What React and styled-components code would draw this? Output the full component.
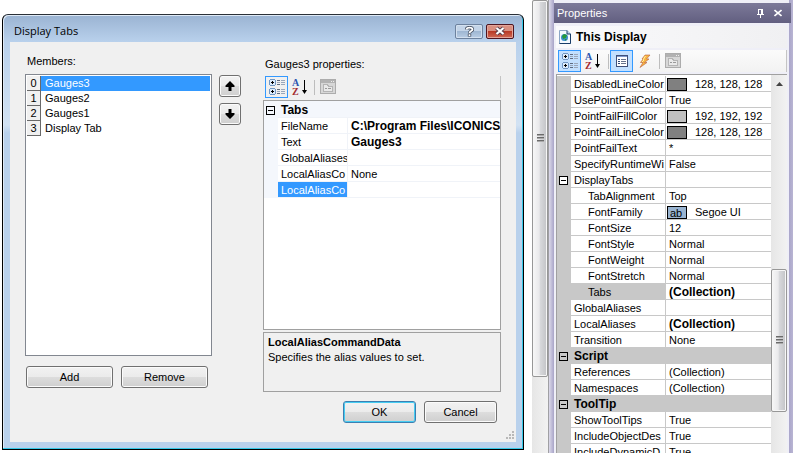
import React, { useState } from "react";
import styled, { createGlobalStyle, css } from "styled-components";

const ui = '"Liberation Sans", Arial, sans-serif';

const Global = createGlobalStyle`
  * { box-sizing: border-box; }
  body { margin: 0; background: #fff; color: #000; font: 11px/16px ${ui}; }
  button { font: inherit; color: inherit; padding: 0; }
`;

const Page = styled.main`
  display: flex;
  height: 100vh;
  overflow: hidden;
`;

/* ---------- dialog ---------- */

const Dialog = styled.section`
  flex: 1;
  min-width: 0;
  display: flex;
  flex-direction: column;
  margin: 14px 8px 3px 2px;
  border: 1px solid #000;
  border-top-color: #2a3038;
  border-radius: 6px 6px 0 0;
  background: linear-gradient(#9ab3d2, #b9d1ec 27px, #d2e2f3 110px, #b9d1ec 118px);
  box-shadow: inset -1px -1px 0 #35c8e8, inset 1px 1px 0 #dfeaf6;
  padding: 0 7px 7px;
`;

const TitleBar = styled.header`
  display: flex;
  align-items: center;
  gap: 3px;
  height: 27px;
  padding: 5px 2px 0 4px;
`;

const DialogTitle = styled.h1`
  flex: 1;
  margin: 0;
  font: 11px/16px "Open Sans", "Noto Sans", sans-serif;
`;

const CaptionButton = styled.button`
  width: 28px;
  height: 15px;
  display: flex;
  align-items: center;
  justify-content: center;
  border: 1px solid ${(p) => (p.$danger ? "#4e1520" : "#6d829e")};
  border-radius: 2px;
  box-shadow: inset 0 0 0 1px ${(p) => (p.$danger ? "#e3a59a" : "#d3e0ef")};
  background: ${(p) =>
    p.$danger
      ? "linear-gradient(#d98f80 0 45%, #b93a26 50%, #cf6a55)"
      : "linear-gradient(#c3d4e8 0 45%, #9fb7d3 50%, #b9cde4)"};
`;

const DialogBody = styled.div`
  flex: 1;
  min-height: 0;
  display: flex;
  flex-direction: column;
  background: #f0f0f0;
  padding: 11px 15px 0;
`;

const Columns = styled.div`
  flex: 1;
  min-height: 0;
  display: flex;
`;

const MembersColumn = styled.div`
  flex: 187 1 0;
  min-width: 0;
  display: flex;
  flex-direction: column;
  padding-bottom: 4px;
`;

const FieldLabel = styled.h2`
  margin: 0 0 ${(p) => p.$gap}px 2px;
  font-weight: normal;
  font-size: 11px;
  line-height: 16px;
`;

const MemberList = styled.ul`
  flex: 1;
  margin: 0;
  padding: 1px;
  list-style: none;
  background: #fff;
  border: 1px solid #828790;
`;

const MemberRow = styled.li`
  display: flex;
  height: 15px;
`;

const MemberIndex = styled.span`
  width: 14px;
  text-align: center;
  line-height: 14px;
  background: #f0f0f0;
  border-right: 1px solid #696969;
  border-bottom: 1px solid #696969;
`;

const MemberName = styled.button`
  flex: 1;
  border: 0;
  padding: 0 4px;
  text-align: left;
  line-height: 15px;
  background: ${(p) => (p.$selected ? "#3399ff" : "transparent")};
  color: ${(p) => (p.$selected ? "#fff" : "#000")};
`;

const ButtonRow = styled.div`
  display: flex;
  gap: 8px;
  padding: ${(p) => p.$pad};
  justify-content: ${(p) => (p.$end ? "flex-end" : "flex-start")};
`;

const PushButton = styled.button`
  flex: ${(p) => (p.$width ? `0 0 ${p.$width}px` : "1")};
  height: 22px;
  display: flex;
  align-items: center;
  justify-content: center;
  border: 1px solid ${(p) => (p.$default ? "#3c7fb1" : "#707070")};
  border-radius: 3px;
  box-shadow: inset 0 0 0 1px ${(p) => (p.$default ? "#46cdf2" : "#fbfbfb")};
  background: linear-gradient(#f2f2f2, #ebebeb 50%, #dddddd 50%, #cfcfcf);
`;

const MoveButton = styled(PushButton)`
  flex: 0 0 22px;
  width: 22px;
`;

const MoveColumn = styled.div`
  display: flex;
  flex-direction: column;
  gap: 6px;
  padding: 22px 22px 0 7px;
`;

const DetailColumn = styled.div`
  flex: 238 1 0;
  min-width: 0;
  display: flex;
  flex-direction: column;
  padding-top: 3px;
`;

/* ---------- tool bars ---------- */

const ToolBar = styled.div`
  display: flex;
  align-items: center;
  height: 22px;
  padding-left: 2px;
  border-right: 1px solid #c4c4c4;
  ${(p) =>
    p.$docked
      ? css`
          margin-top: 2px;
          background: linear-gradient(#fbfbfb, #f2f2f2);
        `
      : css`
          margin-bottom: 2px;
        `}
`;

const ToolButton = styled.button`
  width: 23px;
  height: 22px;
  display: flex;
  align-items: center;
  justify-content: center;
  border: 1px solid ${(p) => (p.$checked ? "#3399ff" : "transparent")};
  background: ${(p) => (p.$checked && p.$filled ? "#c2e0ff" : "transparent")};
`;

const ToolSeparator = styled.span`
  width: 1px;
  height: 15px;
  margin: 0 1px 0 ${(p) => p.$before}px;
  background: #bdbdbd;
`;

/* ---------- property grid ---------- */

const GridFrame = styled.div`
  flex: 1;
  min-height: 0;
  display: flex;
  overflow: hidden;
  border: solid #a0a0a0;
  border-width: ${(p) => (p.$docked ? "1px 0 0 1px" : "1px")};
  background: #fff;
`;

const GridArea = styled.div`
  flex: 1;
  min-width: 0;
  padding-top: 1px;
  background: ${(p) => (p.$docked ? "#fff" : "linear-gradient(#f4f7fc 2px, #fff 2px)")};
`;

const PropTable = styled.table`
  width: 100%;
  table-layout: fixed;
  border-collapse: separate;
  border-spacing: 0;
  --line: ${(p) => (p.$docked ? "#c8c8c8" : "#f0f3f8")};
  --gutter: ${(p) => (p.$docked ? "#c8c8c8" : "#f4f7fc")};
`;

const GutterCol = styled.col`
  width: 14px;
`;

const NameCol = styled.col`
  width: ${(p) => p.$width}px;
`;

const Gutter = styled.td`
  padding: 0;
  height: 16px;
  background: var(--gutter);
`;

const Toggle = styled.button`
  display: block;
  width: 9px;
  height: 9px;
  margin: 0 auto 0 2px;
  border: 1px solid #000;
  background: linear-gradient(#000, #000) center / 5px 1px no-repeat,
    ${(p) => (p.$plain ? "#fff" : "transparent")};
`;

const cell = css`
  height: 16px;
  line-height: 13px;
  text-align: left;
  white-space: nowrap;
  overflow: hidden;
  border-bottom: 1px solid var(--line);
`;

const Category = styled.th`
  ${cell}
  padding: 2px 3px 0;
  font-size: 12px;
  background: var(--gutter);
`;

const PropName = styled.th`
  ${cell}
  font-weight: normal;
  border-right: 1px solid var(--line);
  padding: 2px 0 0 ${(p) => (p.$indent ? 17 : 3)}px;
  ${(p) => p.$shaded && "background: #c8c8c8;"}
  ${(p) => p.$selected && "background: #3399ff; color: #fff;"}
`;

const PropValue = styled.td`
  ${cell}
  padding: 2px 0 0 3px;
  ${(p) => p.$bold && "font-weight: bold; font-size: 12px;"}
`;

const SwatchLine = styled.span`
  display: flex;
  align-items: center;
  gap: 8px;
  height: 13px;
  margin-left: -2px;
`;

const Swatch = styled.span`
  width: 20px;
  height: 13px;
  padding-left: 2px;
  line-height: 12px;
  overflow: hidden;
  border: 1px solid #000;
  background: ${(p) => p.$color};
`;

const HelpPane = styled.div`
  height: 60px;
  margin-top: 2px;
  padding: 2px 4px;
  line-height: 15px;
  border: 1px solid #a0a0a0;
`;

const HelpTitle = styled.strong`
  display: block;
`;

const Grip = styled.svg`
  display: block;
  margin: 8px -13px 3px auto;
`;

/* ---------- scroll bars and docked panel ---------- */

const ScrollTrack = styled.div`
  flex: 0 0 16px;
  display: flex;
  flex-direction: column;
  background: linear-gradient(90deg, #e6e6e6, #f2f2f2);
`;

const ScrollArrow = styled.button`
  height: 18px;
  border: 0;
  background: none;
  display: flex;
  align-items: center;
  justify-content: center;
`;

const ScrollThumb = styled.div`
  height: ${(p) => p.$length}px;
  margin-top: ${(p) => p.$top}px;
  padding-top: ${(p) => p.$gripAt}px;
  border: 1px solid #979797;
  border-radius: 2px;
  box-shadow: inset 0 0 0 1px #f6f6f6;
  background: linear-gradient(90deg, #f7f7f7, #e9e9eb 45%, #d8d9dc 50%, #c2c3c6);
  display: flex;
  justify-content: center;
`;

const Dock = styled.aside`
  flex: 0 0 245px;
  display: flex;
  flex-direction: column;
  padding: 3px 2px 0 0;
  border-left: 1px solid #a0a0a4;
  background: linear-gradient(90deg, #dcdaea, #a8a4c8 5px, #efeff7 5px, #efeff7 240px, #aaa6ca 240px, #b9b5d3);
`;

const DockHeader = styled.header`
  display: flex;
  align-items: center;
  height: 20px;
  margin-left: 5px;
  padding: 0 4px 0 3px;
  color: #fff;
  background: linear-gradient(#7c7999, #625f80);
`;

const DockTitle = styled.h2`
  flex: 1;
  margin: 0;
  font-size: 11px;
  font-weight: normal;
`;

const DockIconButton = styled.button`
  width: 18px;
  height: 16px;
  display: flex;
  align-items: center;
  justify-content: center;
  border: 0;
  background: none;
`;

const DockContent = styled.div`
  flex: 1;
  min-height: 0;
  display: flex;
  flex-direction: column;
  margin: 3px 4px 0 7px;
`;

const ObjectBar = styled.div`
  display: flex;
  align-items: center;
  gap: 5px;
  height: 22px;
  padding-left: 3px;
  font-size: 12px;
  font-weight: bold;
  background: linear-gradient(90deg, #fafafc, #f0f0f2);
`;

const DockGrid = styled(GridFrame)`
  margin: 2px 0 0;
`;

/* ---------- icons ---------- */

const CategorizedIcon = () => (
  <svg width="18" height="18" viewBox="0 0 18 18" aria-hidden="true" shapeRendering="crispEdges">
    {[0, 9].map((y) => (
      <g key={y}>
        <rect x="1.5" y={y + 1.5} width="6" height="6" rx="2" fill="#dcebfb" stroke="#7197c4" />
        <path d={`M3 ${y + 4.5}h3M4.500 ${y + 3}v3`} stroke="#000" />
        <path d={`M9 ${y + 2.5}h3M9 ${y + 6.5}h3`} stroke="#5e6b80" />
        <path d={`M9 ${y + 4.5}h3M13 ${y + 2.5}h4M13 ${y + 4.5}h4M13 ${y + 6.5}h4`} stroke="#9ba7ba" />
      </g>
    ))}
  </svg>
);

const SortText = styled.text`
  font: bold 10px "Liberation Serif", serif;
`;

const SortIcon = () => (
  <svg width="18" height="18" viewBox="0 0 18 18" aria-hidden="true">
    <SortText x="1" y="8" fill="#2c56b0">A</SortText>
    <SortText x="1" y="17" fill="#a32a30">Z</SortText>
    <path d="M13.500 2v12" stroke="#000" />
    <path d="M11 12h5l-2.500 4z" />
  </svg>
);

const PagesIcon = () => (
  <svg width="16" height="16" viewBox="0 0 16 16" aria-hidden="true" shapeRendering="crispEdges">
    <rect x=".5" y=".5" width="15" height="14" fill="#d7d7d7" stroke="#acacac" />
    <path d="M1 2.500h14" stroke="#b2b2b2" strokeWidth="3" />
    <path d="M11 2.500h1M13 2.500h1" stroke="#eee" />
    <path d="M3.500 12.500v-7h4l1 2h4v5z" fill="#e9e9e9" stroke="#b4b4b4" />
    <path d="M5 9.500h2M8 9.500h3" stroke="#999" />
  </svg>
);

const PropertiesIcon = () => (
  <svg width="16" height="16" viewBox="0 0 16 16" aria-hidden="true" shapeRendering="crispEdges">
    <rect x="2.500" y="2.500" width="11" height="11" fill="#fff" stroke="#405078" />
    <path d="M3 3.500h10" stroke="#7c98cc" />
    <path d="M4 6.500h2M4 8.500h2M4 10.500h2" stroke="#304878" />
    <path d="M7 6.500h5M7 8.500h5M7 10.500h5" stroke="#66738c" />
  </svg>
);

const EventsIcon = () => (
  <svg width="16" height="16" viewBox="0 0 16 16" aria-hidden="true">
    <path d="M8 2h5L9.500 6H12L7.500 9.500H10L3 14.500l3-5H3.500L6 6H5z" fill="#f9b440" stroke="#b8603a" strokeWidth=".6" />
    <path d="M8.500 3 6 7M7 7l-2 2" stroke="#fff0a0" />
  </svg>
);

const DisplayIcon = () => (
  <svg width="12" height="14" viewBox="0 0 12 14" aria-hidden="true">
    <path d="M.5.500H8L11.500 4v9.500H.5z" fill="#f4f9ff" stroke="#8ba6c6" />
    <path d="M11.500 4v9.500H.5" fill="none" stroke="#183c68" />
    <path d="M8 .5V4h3.500" fill="#bcd3ec" stroke="#183c68" />
    <circle cx="5.500" cy="7.500" r="3.500" fill="#3d8ed0" />
    <path d="M3 6l2-2 3 1-1 3-3 1zM6 9h2l-2 2z" fill="#259a3b" />
  </svg>
);

const ArrowIcon = ({ down }) => (
  <svg width="10" height="10" viewBox="0 0 10 10" aria-hidden="true">
    <path d={down ? "M3.500 0h3v4H9.500v1.500L5 10 .5 5.500V4h3z" : "M3.500 10h3V6H9.500V4.500L5 0 .5 4.500V6h3z"} />
  </svg>
);

const QuestionIcon = () => (
  <svg width="9" height="11" viewBox="0 0 9 11" aria-hidden="true" fill="none">
    <path d="M1.500 3.500C1.500 1 7.500 1 7.500 3.500 7.500 5 4.500 5 4.500 7.500M4.500 8v2.500" stroke="#454e60" strokeWidth="3.400" />
    <path d="M1.500 3.500C1.500 1 7.500 1 7.500 3.500 7.500 5 4.500 5 4.500 7M4.500 8.300v1.700" stroke="#fff" strokeWidth="1.800" />
  </svg>
);

const CloseIcon = () => (
  <svg width="12" height="10" viewBox="0 0 12 10" aria-hidden="true">
    <path d="M2.500 2l7 6M9.500 2l-7 6" stroke="#563e4c" strokeWidth="4" />
    <path d="M2.500 2l7 6M9.500 2l-7 6" stroke="#fff" strokeWidth="2.200" />
  </svg>
);

const PinIcon = () => (
  <svg width="9" height="10" viewBox="0 0 9 10" aria-hidden="true" fill="none" stroke="#fff" shapeRendering="crispEdges">
    <path d="M2.500 6V1.500h4V6M5.500 1v5M1 6.500h7M4.500 6v4" />
  </svg>
);

const SmallCloseIcon = () => (
  <svg width="8" height="8" viewBox="0 0 8 8" aria-hidden="true">
    <path d="M.5 1l7 6M7.500 1l-7 6" stroke="#fff" strokeWidth="1.600" />
  </svg>
);

const ScrollGrip = () => (
  <svg width="7" height="9" viewBox="0 0 7 9" aria-hidden="true" shapeRendering="crispEdges">
    <path d="M0 .5h7M0 3.500h7M0 6.500h7" stroke="#6b6b6b" />
    <path d="M0 1.500h7M0 4.500h7M0 7.500h7" stroke="#aaa" />
  </svg>
);

/* ---------- data ---------- */

const members = ["Gauges3", "Gauges2", "Gauges1", "Display Tab"];

const tabProps = [
  { category: "Tabs" },
  { name: "FileName", value: "C:\\Program Files\\ICONICS", bold: true },
  { name: "Text", value: "Gauges3", bold: true },
  { name: "GlobalAliases", value: "" },
  { name: "LocalAliasCo", value: "None" },
  { name: "LocalAliasCo", value: "", selected: true },
];

const displayProps = [
  { name: "DisabledLineColor", value: "128, 128, 128", color: "#808080" },
  { name: "UsePointFailColor", value: "True" },
  { name: "PointFailFillColor", value: "192, 192, 192", color: "#c0c0c0" },
  { name: "PointFailLineColor", value: "128, 128, 128", color: "#808080" },
  { name: "PointFailText", value: "*" },
  { name: "SpecifyRuntimeWi", value: "False" },
  { name: "DisplayTabs", value: "", toggle: true },
  { name: "TabAlignment", value: "Top", indent: true },
  { name: "FontFamily", value: "Segoe UI", color: "#99b4d1", sample: "ab", indent: true },
  { name: "FontSize", value: "12", indent: true },
  { name: "FontStyle", value: "Normal", indent: true },
  { name: "FontWeight", value: "Normal", indent: true },
  { name: "FontStretch", value: "Normal", indent: true },
  { name: "Tabs", value: "(Collection)", bold: true, indent: true, shaded: true },
  { name: "GlobalAliases", value: "" },
  { name: "LocalAliases", value: "(Collection)", bold: true },
  { name: "Transition", value: "None" },
  { category: "Script" },
  { name: "References", value: "(Collection)" },
  { name: "Namespaces", value: "(Collection)" },
  { category: "ToolTip" },
  { name: "ShowToolTips", value: "True" },
  { name: "IncludeObjectDes", value: "True" },
  { name: "IncludeDynamicD", value: "True" },
];

function PropertyTable({ rows, docked, nameWidth, label }) {
  return (
    <PropTable $docked={docked} aria-label={label}>
      <colgroup>
        <GutterCol />
        <NameCol $width={nameWidth} />
        <col />
      </colgroup>
      <tbody>
        {rows.map((row, i) =>
          row.category ? (
            <tr key={i}>
              <Gutter>
                <Toggle aria-label={`Collapse ${row.category}`} />
              </Gutter>
              <Category colSpan={2}>{row.category}</Category>
            </tr>
          ) : (
            <tr key={i}>
              <Gutter>{row.toggle && <Toggle $plain aria-label={`Collapse ${row.name}`} />}</Gutter>
              <PropName scope="row" $indent={row.indent} $shaded={row.shaded} $selected={row.selected}>
                {row.name}
              </PropName>
              <PropValue $bold={row.bold}>
                {row.color ? (
                  <SwatchLine>
                    <Swatch $color={row.color}>{row.sample}</Swatch>
                    {row.value}
                  </SwatchLine>
                ) : (
                  row.value
                )}
              </PropValue>
            </tr>
          )
        )}
      </tbody>
    </PropTable>
  );
}

export default function App() {
  const [selected, setSelected] = useState(0);
  return (
    <Page>
      <Global />
      <Dialog role="dialog" aria-labelledby="dialog-title">
        <TitleBar>
          <DialogTitle id="dialog-title">Display Tabs</DialogTitle>
          <CaptionButton aria-label="Help"><QuestionIcon /></CaptionButton>
          <CaptionButton $danger aria-label="Close"><CloseIcon /></CaptionButton>
        </TitleBar>
        <DialogBody>
          <Columns>
            <MembersColumn>
              <FieldLabel $gap={5} id="members-label">Members:</FieldLabel>
              <MemberList aria-labelledby="members-label">
                {members.map((name, i) => (
                  <MemberRow key={name}>
                    <MemberIndex>{i}</MemberIndex>
                    <MemberName $selected={i === selected} onClick={() => setSelected(i)}>{name}</MemberName>
                  </MemberRow>
                ))}
              </MemberList>
              <ButtonRow $pad="10px 4px 0 1px">
                <PushButton>Add</PushButton>
                <PushButton>Remove</PushButton>
              </ButtonRow>
            </MembersColumn>
            <MoveColumn>
              <MoveButton aria-label="Move up"><ArrowIcon /></MoveButton>
              <MoveButton aria-label="Move down"><ArrowIcon down /></MoveButton>
            </MoveColumn>
            <DetailColumn>
              <FieldLabel $gap={4}>Gauges3 properties:</FieldLabel>
              <ToolBar role="toolbar" aria-label="Tab property views">
                <ToolButton $checked aria-label="Categorized"><CategorizedIcon /></ToolButton>
                <ToolButton aria-label="Alphabetical"><SortIcon /></ToolButton>
                <ToolSeparator $before={3} />
                <ToolButton disabled aria-label="Property pages"><PagesIcon /></ToolButton>
              </ToolBar>
              <GridFrame>
                <GridArea>
                  <PropertyTable rows={tabProps} nameWidth={70} label="Tab properties" />
                </GridArea>
              </GridFrame>
              <HelpPane>
                <HelpTitle>LocalAliasCommandData</HelpTitle>
                Specifies the alias values to set.
              </HelpPane>
            </DetailColumn>
          </Columns>
          <ButtonRow $end $pad="9px 4px 0 0">
            <PushButton $default $width={73}>OK</PushButton>
            <PushButton $width={73}>Cancel</PushButton>
          </ButtonRow>
          <Grip width="8" height="8" viewBox="0 0 8 8" aria-hidden="true" fill="#b8b8b8">
            <path d="M6 0h2v2H6zM3 3h2v2H3zM6 3h2v2H6zM0 6h2v2H0zM3 6h2v2H3zM6 6h2v2H6z" />
          </Grip>
        </DialogBody>
      </Dialog>
      <ScrollTrack>
        <ScrollThumb $length={377} $top={0} $gripAt={133}><ScrollGrip /></ScrollThumb>
      </ScrollTrack>
      <Dock>
        <DockHeader>
          <DockTitle>Properties</DockTitle>
          <DockIconButton aria-label="Auto hide"><PinIcon /></DockIconButton>
          <DockIconButton aria-label="Close panel"><SmallCloseIcon /></DockIconButton>
        </DockHeader>
        <DockContent>
          <ObjectBar><DisplayIcon />This Display</ObjectBar>
          <ToolBar $docked role="toolbar" aria-label="Display property views">
            <ToolButton $checked $filled aria-label="Categorized"><CategorizedIcon /></ToolButton>
            <ToolButton aria-label="Alphabetical"><SortIcon /></ToolButton>
            <ToolSeparator $before={4} />
            <ToolButton $checked $filled aria-label="Properties"><PropertiesIcon /></ToolButton>
            <ToolButton aria-label="Events"><EventsIcon /></ToolButton>
            <ToolSeparator $before={3} />
            <ToolButton disabled aria-label="Property pages"><PagesIcon /></ToolButton>
          </ToolBar>
          <DockGrid $docked>
            <GridArea $docked>
              <PropertyTable rows={displayProps} docked nameWidth={95} label="Display properties" />
            </GridArea>
            <ScrollTrack>
              <ScrollArrow aria-label="Scroll up">
                <svg width="7" height="4" viewBox="0 0 7 4" aria-hidden="true"><path d="M3.500 0 7 4H0z" fill="#444" /></svg>
              </ScrollArrow>
              <ScrollThumb $length={143} $top={176} $gripAt={66}><ScrollGrip /></ScrollThumb>
            </ScrollTrack>
          </DockGrid>
        </DockContent>
      </Dock>
    </Page>
  );
}
